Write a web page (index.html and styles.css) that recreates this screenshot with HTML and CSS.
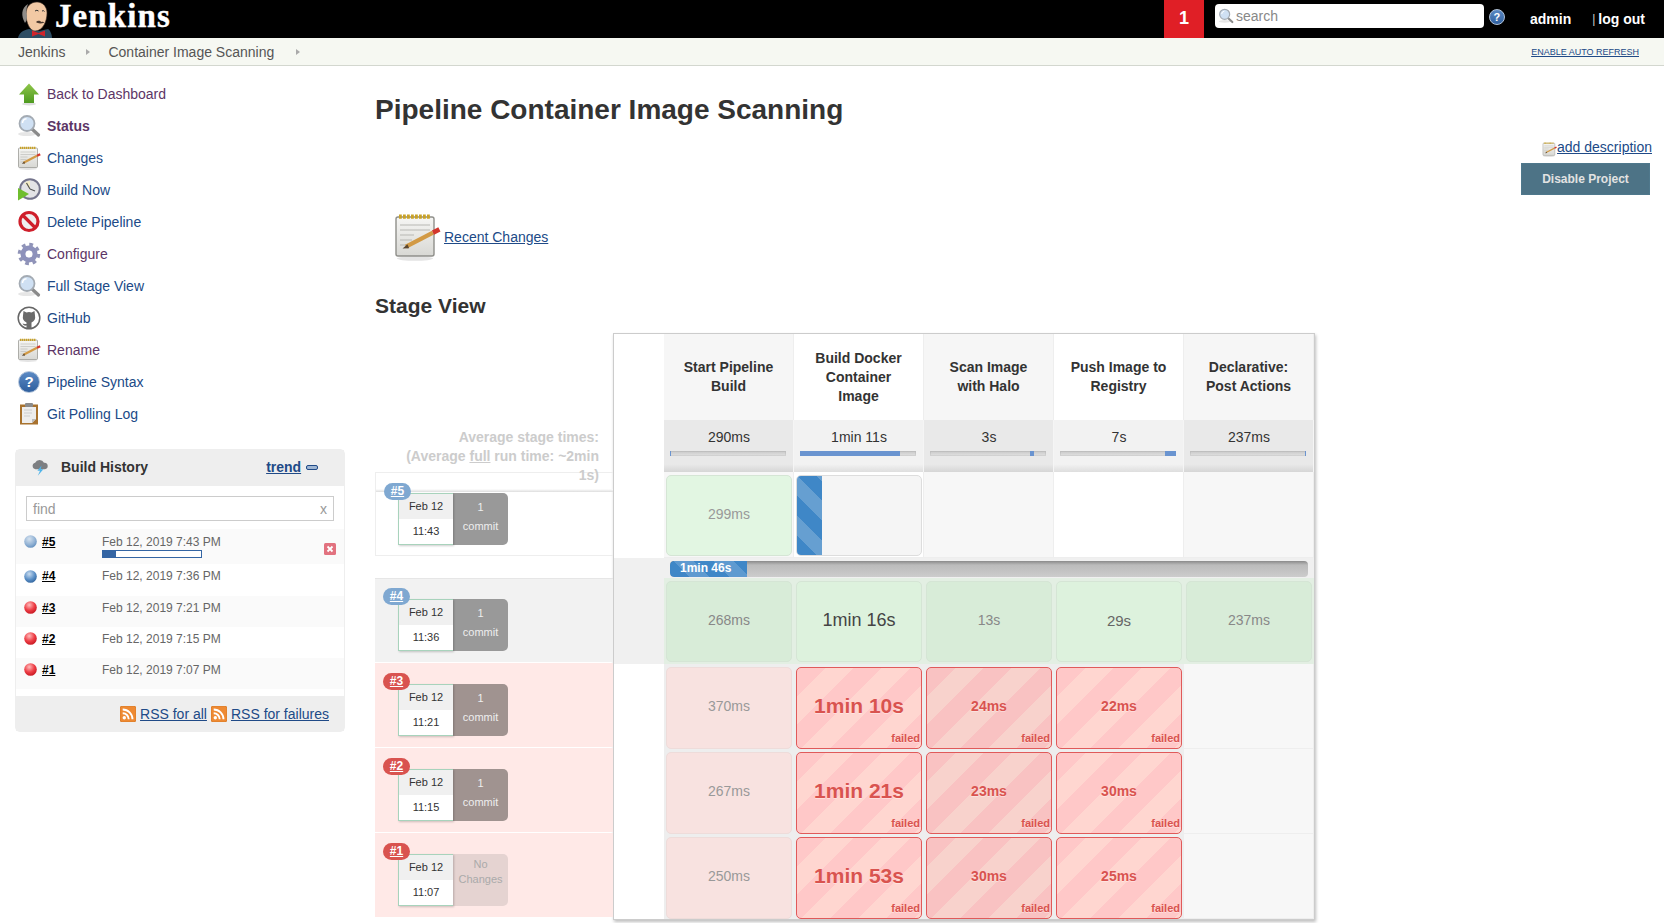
FILE: index.html
```html
<!DOCTYPE html>
<html lang="en">
	<head>
		<meta charset="UTF-8" />
		<title>Container Image Scanning [Jenkins]</title>
		<link rel="stylesheet" href="styles.css">
	</head>
	<body>
		<!-- shared icons -->
		<svg class="icon-defs" width="0" height="0">
			<defs>
				<radialGradient id="ball-blue" cx="40%" cy="30%" r="75%">
					<stop offset="0" stop-color="#c9dcef" />
					<stop offset="0.6" stop-color="#5b8fc6" />
					<stop offset="1" stop-color="#2f639c" />
				</radialGradient>
				<radialGradient id="ball-pale" cx="40%" cy="30%" r="75%">
					<stop offset="0" stop-color="#d5e2ef" />
					<stop offset="0.65" stop-color="#8fb0d3" />
					<stop offset="1" stop-color="#5f8dbd" />
				</radialGradient>
				<radialGradient id="ball-red" cx="40%" cy="30%" r="75%">
					<stop offset="0" stop-color="#fbb" />
					<stop offset="0.55" stop-color="#ee3f47" />
					<stop offset="1" stop-color="#c4141e" />
				</radialGradient>
				<linearGradient id="arrow-green" x1="0" y1="0" x2="0" y2="1">
					<stop offset="0" stop-color="#8fc64a" />
					<stop offset="1" stop-color="#4e9a20" />
				</linearGradient>
				<linearGradient id="paper" x1="0" y1="0" x2="0" y2="1">
					<stop offset="0" stop-color="#f6f6f4" />
					<stop offset="1" stop-color="#d8d8d4" />
				</linearGradient>
			</defs>
			<symbol id="i-up" viewBox="0 0 24 24">
				<ellipse cx="12" cy="22" rx="7" ry="1.5" fill="#ddd" />
				<path d="M12 1.5 22 12.5h-5V21H7v-8.500H2z" fill="url(#arrow-green)" />
			</symbol>
			<symbol id="i-search" viewBox="0 0 24 24">
				<ellipse cx="10" cy="20" rx="9" ry="2" fill="#e6e6e6" />
				<path d="M15 15l6.500 6" stroke="#8a8a8a" stroke-width="3.200" stroke-linecap="round" />
				<circle cx="10" cy="9.500" r="7.500" fill="#cfe0f3" stroke="#a4abb3" stroke-width="1.800" />
				<path d="M5.500 9a4.500 4.500 0 0 1 4-4.200" fill="none" stroke="#fff" stroke-width="1.500" />
			</symbol>
			<symbol id="i-notepad" viewBox="0 0 24 24">
				<ellipse cx="11" cy="22.800" rx="9" ry="1.100" fill="#e4e4e4" />
				<rect x="1.500" y="2" width="19" height="19.500" rx="1" fill="url(#paper)" stroke="#8f8f8a" stroke-width=".7" />
				<path d="M3 1.800h16" stroke="#c9a227" stroke-width="2.200" stroke-dasharray="1.400 .6" />
				<path d="M3.500 6h15M3.500 8.500h15M3.500 11h7M3.500 13.500h6M3.500 16h5" stroke="#b8b8b4" stroke-width=".6" />
				<path d="M6.500 16.800 20 9.800" stroke="#d29a45" stroke-width="2.200" />
				<path d="M20 9.800 23.200 8.200" stroke="#d3362c" stroke-width="2.400" />
				<path d="M4.800 17.800 7.200 15.600l.9 2z" fill="#5a4630" />
			</symbol>
			<symbol id="i-clock" viewBox="0 0 24 24">
				<circle cx="13" cy="11" r="9.800" fill="#e3e3e6" stroke="#74748c" stroke-width="2" />
				<path d="M13 11V3a8 8 0 0 0-5.500 2.200z" fill="#f3ecc4" />
				<path d="M13 11 9.500 5M13 11l5 2" stroke="#555" stroke-width="1.200" />
				<path d="M1 10 12 16 1 22.500z" fill="#6fbe2e" />
			</symbol>
			<symbol id="i-no" viewBox="0 0 24 24">
				<circle cx="12" cy="11.500" r="9" fill="#efefef" stroke="#cf1f2b" stroke-width="3.200" />
				<path d="M5.500 5 18.500 18" stroke="#cf1f2b" stroke-width="3.200" />
			</symbol>
			<symbol id="i-gear" viewBox="0 0 24 24">
				<circle cx="12" cy="12" r="6" fill="none" stroke="#8d91bb" stroke-width="5" />
				<circle cx="12" cy="12" r="9.500" fill="none" stroke="#9094b8" stroke-width="3.500" stroke-dasharray="3.700 3.760" />
				<circle cx="12" cy="12" r="3.200" fill="#fff" />
			</symbol>
			<symbol id="i-github" viewBox="0 0 24 24">
				<circle cx="12" cy="12" r="10.800" fill="#fff" stroke="#666" stroke-width="1.500" />
				<path d="M6 9.500 6.500 5l3 1.500a8 8 0 0 1 5 0L17.500 5l.5 4.500a6.300 6.300 0 0 1-3.500 7V22h-5v-2.500c-2 .5-3.200-.3-4-2 1 .3 2 .7 4 .5v-1.500A6.300 6.300 0 0 1 6 9.500z" fill="#6a6a6a" />
			</symbol>
			<symbol id="i-clip" viewBox="0 0 24 24">
				<rect x="3" y="2.500" width="18" height="20" fill="#a8722e" />
				<path d="M5 5h14v12l-4 4H5z" fill="#ededed" />
				<path d="M15 21v-4h4z" fill="#bbb" />
				<path d="M7 8h8M7 11h8M7 14h6" stroke="#ddd" stroke-width="2" />
				<rect x="8" y="1" width="8" height="4" rx="1" fill="#8b8b8b" />
			</symbol>
			<symbol id="i-weather" viewBox="0 0 24 24">
				<path d="M6 15a4.500 4.500 0 0 1-.5-8.800 6.500 6.500 0 0 1 11.800.2A4.300 4.300 0 0 1 18.500 15z" fill="#7d7f82" />
				<path d="M14 10 8.500 17H12l-3 6.500L16.500 15H13z" fill="#4fb3e8" />
			</symbol>
			<symbol id="i-rss" viewBox="0 0 16 16">
				<rect width="16" height="16" rx="2.500" fill="#ee8a33" stroke="#d97a26" />
				<circle cx="4.300" cy="11.700" r="1.700" fill="#fff" />
				<path d="M2.700 7.200a6 6 0 0 1 6 6M2.700 3.500a9.800 9.800 0 0 1 9.800 9.800" fill="none" stroke="#fff" stroke-width="1.900" />
			</symbol>
			<symbol id="i-stop" viewBox="0 0 12 12">
				<rect width="12" height="12" rx="1.500" fill="#e2727f" />
				<path d="M3.500 3.500l5 5M8.500 3.500l-5 5" stroke="#fff" stroke-width="1.800" />
			</symbol>
			<symbol id="i-ball-pale" viewBox="0 0 12 12"><circle cx="6" cy="6" r="5.800" fill="url(#ball-pale)" /></symbol>
			<symbol id="i-ball-blue" viewBox="0 0 12 12"><circle cx="6" cy="6" r="5.800" fill="url(#ball-blue)" /></symbol>
			<symbol id="i-ball-red" viewBox="0 0 12 12"><circle cx="6" cy="6" r="5.800" fill="url(#ball-red)" /></symbol>
		</svg>

		<header class="top-bar">
			<a class="logo" href="#">
				<svg class="butler" viewBox="0 0 34 38" width="34" height="38">
					<path d="M0 38c1-5 5-8 11-9l10 2 9-2c2 1 4 5 4 9z" fill="#2d4d63" />
					<path d="M8 14C8 6 13 2 19 2c6 0 10 5 10 11 0 8-4 18-12 18-5 0-9-8-9-17z" fill="#f2c9a4" stroke="#3a2a22" stroke-width=".6" />
					<path d="M7 23C3 16 3 8 10 4c-2 4-2 9-1 12 0 3-.5 5-2 7z" fill="#8f8c88" />
					<path d="M17 11q2-1.500 3.500 0M24 11q1.500-1 2.500.5" fill="none" stroke="#333" stroke-width="1" />
					<path d="M18 22c2-2 4-1 5.500 0 1-.5 2-.5 3 .5-3 1-6 1.500-8.500-.5z" fill="#4b3a30" />
					<path d="M14 30.500l6.500 2.500 6.500-2.500v6l-6.500-2.500-6.500 2.500z" fill="#d0242b" />
				</svg>
				<span class="logo-text">Jenkins</span>
			</a>
			<div class="alert-count">1</div>
			<div class="search-box">
				<svg class="search-icon"><use href="#i-search" /></svg>
				<span>search</span>
			</div>
			<span class="help-dot top-help">?</span>
			<a class="top-link user-link" href="#">admin</a>
			<span class="top-sep">|</span>
			<a class="top-link" href="#">log out</a>
		</header>

		<nav class="breadcrumbs">
			<a href="#">Jenkins</a>
			<span class="crumb-arrow"></span>
			<a href="#">Container Image Scanning</a>
			<span class="crumb-arrow crumb-last"></span>
			<a class="auto-refresh" href="#">ENABLE AUTO REFRESH</a>
		</nav>

		<div class="page">
			<aside class="sidebar">
				<ul class="side-tasks">
					<li><svg><use href="#i-up" /></svg><a class="visited" href="#">Back to Dashboard</a></li>
					<li><svg><use href="#i-search" /></svg><a class="visited current" href="#">Status</a></li>
					<li><svg><use href="#i-notepad" /></svg><a href="#">Changes</a></li>
					<li><svg><use href="#i-clock" /></svg><a href="#">Build Now</a></li>
					<li><svg><use href="#i-no" /></svg><a href="#">Delete Pipeline</a></li>
					<li><svg><use href="#i-gear" /></svg><a class="visited" href="#">Configure</a></li>
					<li><svg><use href="#i-search" /></svg><a href="#">Full Stage View</a></li>
					<li><svg><use href="#i-github" /></svg><a href="#">GitHub</a></li>
					<li><svg><use href="#i-notepad" /></svg><a class="visited" href="#">Rename</a></li>
					<li><span class="help-dot side-help">?</span><a href="#">Pipeline Syntax</a></li>
					<li><svg><use href="#i-clip" /></svg><a href="#">Git Polling Log</a></li>
				</ul>

				<section class="history">
					<div class="history-head">
						<svg class="weather-icon"><use href="#i-weather" /></svg>
						<b class="history-title">Build History</b>
						<a class="trend" href="#">trend</a>
						<span class="collapse"></span>
					</div>
					<div class="history-find"><span>find</span><span>x</span></div>
					<div class="history-row alt running">
						<svg class="ball"><use href="#i-ball-pale" /></svg>
						<a class="build-no" href="#">#5</a>
						<span class="build-date">Feb 12, 2019 7:43 PM</span>
						<svg class="stop"><use href="#i-stop" /></svg>
						<div class="mini-progress"><div class="mini-fill" style="width: 13%"></div></div>
					</div>
					<div class="history-row">
						<svg class="ball"><use href="#i-ball-blue" /></svg>
						<a class="build-no" href="#">#4</a>
						<span class="build-date">Feb 12, 2019 7:36 PM</span>
					</div>
					<div class="history-row alt">
						<svg class="ball"><use href="#i-ball-red" /></svg>
						<a class="build-no" href="#">#3</a>
						<span class="build-date">Feb 12, 2019 7:21 PM</span>
					</div>
					<div class="history-row">
						<svg class="ball"><use href="#i-ball-red" /></svg>
						<a class="build-no" href="#">#2</a>
						<span class="build-date">Feb 12, 2019 7:15 PM</span>
					</div>
					<div class="history-row alt">
						<svg class="ball"><use href="#i-ball-red" /></svg>
						<a class="build-no" href="#">#1</a>
						<span class="build-date">Feb 12, 2019 7:07 PM</span>
					</div>
					<div class="history-foot">
						<svg><use href="#i-rss" /></svg><a href="#">RSS for all</a>
						<svg><use href="#i-rss" /></svg><a href="#">RSS for failures</a>
					</div>
				</section>
			</aside>

			<main class="main">
				<div class="project-head">
					<h1>Pipeline Container Image Scanning</h1>
					<div class="project-actions">
						<div class="add-desc"><svg><use href="#i-notepad" /></svg><a href="#">add description</a></div>
						<button class="disable-btn">Disable Project</button>
					</div>
				</div>

				<div class="recent">
					<svg><use href="#i-notepad" /></svg>
					<a href="#">Recent Changes</a>
				</div>

				<h2>Stage View</h2>

				<div class="stage">
					<div class="builds">
						<div class="avg-label">Average stage times:<br>(Average <u>full</u> run time: ~2min 1s)</div>

						<div class="build first">
							<a class="badge" href="#">#5</a>
							<div class="build-date-card"><span>Feb 12</span><span>11:43</span></div>
							<div class="commits"><span>1</span><span>commit</span></div>
						</div>
						<div class="build second">
							<a class="badge" href="#">#4</a>
							<div class="build-date-card"><span>Feb 12</span><span>11:36</span></div>
							<div class="commits"><span>1</span><span>commit</span></div>
						</div>
						<div class="build failed">
							<a class="badge" href="#">#3</a>
							<div class="build-date-card"><span>Feb 12</span><span>11:21</span></div>
							<div class="commits"><span>1</span><span>commit</span></div>
						</div>
						<div class="build failed">
							<a class="badge" href="#">#2</a>
							<div class="build-date-card"><span>Feb 12</span><span>11:15</span></div>
							<div class="commits"><span>1</span><span>commit</span></div>
						</div>
						<div class="build failed">
							<a class="badge" href="#">#1</a>
							<div class="build-date-card"><span>Feb 12</span><span>11:07</span></div>
							<div class="commits no-changes"><span>No Changes</span></div>
						</div>
					</div>

					<div class="stage-table">
						<div class="label"></div>
						<div class="head">Start Pipeline Build</div>
						<div class="head even">Build Docker Container Image</div>
						<div class="head">Scan Image with Halo</div>
						<div class="head even">Push Image to Registry</div>
						<div class="head">Declarative: Post Actions</div>

						<div class="label"></div>
						<div class="avg">290ms<div class="avg-bar"><div class="avg-fill" style="left: 0; width: 1px"></div></div></div>
						<div class="avg even">1min 11s<div class="avg-bar"><div class="avg-fill" style="left: 0; width: 86%"></div></div></div>
						<div class="avg">3s<div class="avg-bar"><div class="avg-fill" style="left: 86%; width: 4px"></div></div></div>
						<div class="avg even">7s<div class="avg-bar"><div class="avg-fill" style="right: 0; width: 11px"></div></div></div>
						<div class="avg">237ms<div class="avg-bar"><div class="avg-fill" style="right: 0; width: 1px"></div></div></div>

						<div class="label"></div>
						<div class="slot"><div class="cell ok light">299ms</div></div>
						<div class="slot even"><div class="cell running-cell"><div class="running-fill"></div></div></div>
						<div class="slot"></div>
						<div class="slot even"></div>
						<div class="slot"></div>

						<div class="run-strip">
							<div class="run-bar"><div class="run-fill">1min 46s</div></div>
						</div>

						<div class="label grey"></div>
						<div class="slot ok-row"><div class="cell ok dim">268ms</div></div>
						<div class="slot ok-row"><div class="cell ok big">1min 16s</div></div>
						<div class="slot ok-row"><div class="cell ok dim">13s</div></div>
						<div class="slot ok-row"><div class="cell ok mid">29s</div></div>
						<div class="slot ok-row"><div class="cell ok dim">237ms</div></div>

						<div class="label"></div>
						<div class="slot fail-row"><div class="cell pale">370ms</div></div>
						<div class="slot fail-row"><div class="cell fail huge">1min 10s<em>failed</em></div></div>
						<div class="slot fail-row"><div class="cell fail muted">24ms<em>failed</em></div></div>
						<div class="slot fail-row"><div class="cell fail">22ms<em>failed</em></div></div>
						<div class="slot"></div>

						<div class="label"></div>
						<div class="slot fail-row"><div class="cell pale">267ms</div></div>
						<div class="slot fail-row"><div class="cell fail huge">1min 21s<em>failed</em></div></div>
						<div class="slot fail-row"><div class="cell fail muted">23ms<em>failed</em></div></div>
						<div class="slot fail-row"><div class="cell fail">30ms<em>failed</em></div></div>
						<div class="slot"></div>

						<div class="label"></div>
						<div class="slot fail-row"><div class="cell pale">250ms</div></div>
						<div class="slot fail-row"><div class="cell fail huge">1min 53s<em>failed</em></div></div>
						<div class="slot fail-row"><div class="cell fail muted">30ms<em>failed</em></div></div>
						<div class="slot fail-row"><div class="cell fail">25ms<em>failed</em></div></div>
						<div class="slot"></div>
					</div>
				</div>
			</main>
		</div>
	</body>
</html>
```

FILE: styles.css
```css
html,
body {
	height: 100%;
	overflow: hidden;
}
body {
	margin: 0;
	font-family: "Liberation Sans", Arial, sans-serif;
	font-size: 14px;
	color: #333;
	background: #fff;
}
a {
	color: #204a87;
	text-decoration: none;
}
svg {
	display: block;
	flex: none;
}
.icon-defs {
	position: absolute;
}
.help-dot {
	display: block;
	flex: none;
	box-sizing: border-box;
	border-radius: 50%;
	border: 1px solid #b3c4da;
	background: linear-gradient(#5b8ac4, #2f5f9e);
	color: #fff;
	font-weight: bold;
	text-align: center;
}

/* top bar */
.top-bar {
	display: flex;
	align-items: center;
	height: 38px;
	padding-right: 19px;
	background: #000;
}
.logo {
	display: flex;
	align-items: flex-start;
	margin-left: 18px;
	margin-right: auto;
}
.logo-text {
	margin-left: 3px;
	font-family: "Liberation Serif", serif;
	font-size: 33px;
	font-weight: bold;
	line-height: 33px;
	letter-spacing: 1.1px;
	color: #fff;
	-webkit-text-stroke: 0.4px #fff;
}
.alert-count {
	width: 40px;
	height: 38px;
	font-size: 18px;
	font-weight: bold;
	line-height: 36px;
	text-align: center;
	color: #fff;
	background: #e01f26;
}
.search-box {
	display: flex;
	align-items: center;
	gap: 2px;
	width: 269px;
	height: 24px;
	margin-left: 11px;
	margin-bottom: 6px;
	padding-left: 3px;
	box-sizing: border-box;
	border-radius: 4px;
	background: #fff;
	color: #888;
	font-size: 14px;
}
.search-icon {
	width: 16px;
	height: 16px;
}
.top-help {
	width: 16px;
	height: 16px;
	margin-left: 5px;
	margin-bottom: 4px;
	font-size: 11px;
	line-height: 14px;
}
.top-link {
	font-weight: bold;
	color: #fff;
}
.user-link {
	margin-left: 25px;
}
.top-sep {
	margin-left: 21px;
	margin-right: 3px;
	font-size: 12px;
	color: #ccc;
}

/* breadcrumbs */
.breadcrumbs {
	display: flex;
	align-items: center;
	height: 27px;
	padding-left: 18px;
	background: #f6f8f2;
	border-bottom: 1px solid #d3d7cf;
}
.breadcrumbs a {
	color: #555;
}
.crumb-arrow {
	width: 0;
	height: 0;
	margin: 0 18px 0 21px;
	border-left: 4px solid #aaa;
	border-top: 3.5px solid transparent;
	border-bottom: 3.500px solid transparent;
}
.crumb-last {
	margin-left: 22px;
	margin-right: auto;
}
.breadcrumbs .auto-refresh {
	margin-right: 25px;
	font-size: 9px;
	color: #204a87;
	text-decoration: underline;
}

/* layout */
.page {
	display: flex;
}
.sidebar {
	width: 375px;
	flex: none;
	padding-top: 12px;
	box-sizing: border-box;
}
.side-tasks {
	margin: 0;
	padding: 0 0 0 17px;
	list-style: none;
}
.side-tasks li {
	display: flex;
	align-items: center;
	gap: 6px;
	height: 32px;
}
.side-tasks svg {
	width: 24px;
	height: 24px;
}
.side-help {
	width: 22px;
	height: 22px;
	margin: 0 1px;
	font-size: 15px;
	line-height: 20px;
}
.visited {
	color: #5c3566;
}
.current {
	font-weight: bold;
}

/* build history */
.history {
	width: 330px;
	margin: 19px 0 0 15px;
	box-sizing: border-box;
	border: 1px solid #eee;
	border-radius: 5px;
}
.history-head {
	display: flex;
	align-items: center;
	height: 36px;
	padding: 0 0 2px 15px;
	box-sizing: border-box;
	background: #eee;
}
.weather-icon {
	width: 18px;
	height: 18px;
}
.history-title {
	margin-left: 12px;
}
.trend {
	margin-left: 118px;
	font-weight: bold;
	text-decoration: underline;
}
.collapse {
	width: 10px;
	height: 3px;
	margin-left: 5px;
	border: 1px solid #204a87;
	border-radius: 2px;
	background: #9fb6d3;
}
.history-find {
	display: flex;
	justify-content: space-between;
	align-items: center;
	height: 25px;
	margin: 10px 10px 8px;
	padding: 0 6px;
	box-sizing: border-box;
	border: 1px solid #ccc;
	color: #999;
}
.history-row {
	display: flex;
	flex-wrap: wrap;
	align-items: center;
	height: 31px;
	padding: 0 0 8px 8px;
	box-sizing: border-box;
	font-size: 12px;
}
.history-row.alt {
	background: #fafafa;
}
.history-row.running {
	position: relative;
	height: 35px;
	align-items: flex-start;
	padding: 6px 0 0 8px;
}
.history-row:nth-child(4) {
	height: 32px;
}
.ball {
	width: 13px;
	height: 13px;
	margin-right: 5px;
}
.build-no {
	width: 60px;
	font-weight: bold;
	color: #000;
	text-decoration: underline;
}
.build-date {
	color: #666;
}
.stop {
	position: absolute;
	top: 14px;
	right: 8px;
	width: 12px;
	height: 12px;
}
.mini-progress {
	position: absolute;
	left: 86px;
	top: 21px;
	width: 100px;
	height: 8px;
	box-sizing: border-box;
	border: 1px solid #3465a4;
	background: #fff;
}
.mini-fill {
	height: 100%;
	background: #3465a4;
}
.history-foot {
	display: flex;
	justify-content: flex-end;
	align-items: center;
	height: 35px;
	margin-top: 7px;
	padding-right: 15px;
	background: #eee;
}
.history-foot svg {
	width: 16px;
	height: 16px;
	margin: 0 4px;
}
.history-foot a {
	text-decoration: underline;
}

/* main */
.main {
	flex: 1;
	min-width: 0;
	padding: 27px 13px 0 0;
}
.project-head {
	display: flex;
	justify-content: space-between;
	min-height: 120px;
}
h1 {
	margin: 0;
	font-size: 28px;
	line-height: 34px;
	color: #333;
}
.project-actions {
	display: flex;
	flex-direction: column;
	align-items: flex-end;
	padding-top: 46px;
}
.add-desc {
	display: flex;
	align-items: flex-end;
	height: 16px;
	margin-right: -1px;
}
.add-desc svg {
	width: 15px;
	height: 15px;
	margin-bottom: -2px;
}
.add-desc a {
	text-decoration: underline;
	line-height: 16px;
}
.disable-btn {
	width: 129px;
	height: 32px;
	margin: 8px 1px 0 0;
	border: 1px solid #4f788c;
	background: #4d7386;
	color: #e2e2e2;
	font-family: inherit;
	font-size: 12px;
	font-weight: bold;
}
.recent {
	display: flex;
	align-items: center;
	gap: 3px;
	height: 48px;
	padding-left: 18px;
}
.recent svg {
	width: 48px;
	height: 48px;
}
.recent a {
	font-size: 14px;
	text-decoration: underline;
}
h2 {
	margin: 32px 0 14px;
	font-size: 21px;
	line-height: 26px;
	color: #333;
}

/* stage view */
.stage {
	display: flex;
	align-items: flex-start;
}
.builds {
	position: relative;
	width: 238px;
	flex: none;
	padding-top: 139px;
}
.avg-label {
	position: absolute;
	z-index: 2;
	top: 95px;
	right: 14px;
	width: 200px;
	font-weight: bold;
	line-height: 19px;
	text-align: right;
	color: #ccc;
}
.build {
	position: relative;
	display: flex;
	height: 84px;
	margin-top: 1px;
	padding: 21px 0 0 23px;
	box-sizing: border-box;
}
.build.first {
	margin-top: 0;
	border: 1px solid #eee;
	border-right: 0;
	padding: 20px 0 0 22px;
}
.build.first::before {
	content: "";
	position: absolute;
	left: 0;
	right: 0;
	top: 16px;
	height: 3px;
	background: linear-gradient(#fff, #ddd);
}
.build.second {
	margin-top: 22px;
	padding-top: 20px;
	border-top: 1px solid #e6e6e6;
	background: #f2f2f2;
}
.build.failed {
	background: #ffe9e7;
}
.badge {
	position: absolute;
	z-index: 1;
	left: 8px;
	top: 10px;
	width: 27px;
	height: 17px;
	border-radius: 9px;
	background: #7fa8d1;
	color: #fff;
	font-size: 12px;
	font-weight: bold;
	line-height: 17px;
	text-align: center;
	text-decoration: underline;
}
.second .badge {
	top: 9px;
}
.failed .badge {
	background: #d9534f;
}
.build-date-card {
	position: relative;
	display: flex;
	flex-direction: column;
	width: 55px;
	height: 52px;
	box-sizing: border-box;
	border: 1px solid #a8d3bc;
	border-right: 0;
	box-shadow: 1px 1px 2px rgba(0, 0, 0, 0.2);
	font-size: 11px;
	text-align: center;
	color: #333;
}
.build-date-card span {
	flex: 1;
	line-height: 25px;
	background: #fff;
}
.build-date-card span:first-child {
	background: #f0f0f0;
}
.commits {
	display: flex;
	flex-direction: column;
	justify-content: center;
	width: 55px;
	height: 52px;
	padding-bottom: 5px;
	box-sizing: border-box;
	border-radius: 0 5px 5px 0;
	background: #999;
	color: #eee;
	font-size: 11px;
	line-height: 19px;
	text-align: center;
}
.failed .commits {
	background: #a09390;
}
.failed .commits.no-changes {
	padding-bottom: 16px;
	background: #e5d3d1;
	color: #aaa;
	line-height: 15px;
}
.stage-table {
	display: grid;
	grid-template-columns: 50px repeat(5, 130px);
	grid-template-rows: 86px 52px 86px 20px 86px 85px 85px 85px;
	border: 1px solid #ccc;
	box-shadow: 1px 2px 3px rgba(0, 0, 0, 0.25);
	background: #fff;
}
.label.grey {
	background: #f0f0f0;
}
.head {
	display: flex;
	align-items: center;
	justify-content: center;
	padding: 0 15px;
	border-right: 1px solid #eee;
	background: #f6f6f6;
	font-weight: bold;
	line-height: 19px;
	text-align: center;
	color: #333;
}
.head.even {
	background: #fff;
}
.avg {
	padding: 9px 4px 0 5px;
	border-right: 1px solid #f5f5f5;
	box-sizing: border-box;
	background: linear-gradient(#e9e9e9 85%, #d6d6d6);
	line-height: 17px;
	text-align: center;
	color: #333;
}
.avg.even {
	background: linear-gradient(#f2f2f2 85%, #dedede);
}
.avg-bar {
	position: relative;
	height: 5px;
	margin: 5px 3px 0 1px;
	background: linear-gradient(#c8c8c8, #e2e2e2);
	box-shadow: inset 0 0 0 1px rgba(0, 0, 0, 0.06);
}
.avg-fill {
	position: absolute;
	top: 0;
	bottom: 0;
	background: #6a94d0;
}
.slot {
	padding: 3px 1px 1px 2px;
	box-sizing: border-box;
	border-right: 1px solid #eee;
	border-bottom: 1px solid #eee;
	background: #f7f7f7;
}
.slot.even {
	background: #fff;
}
.slot.ok-row {
	background: #e3efe3;
	border-color: #e3efe3;
}
.slot.fail-row {
	padding-bottom: 0;
	border-bottom: 0;
	background: #eee;
}
.cell {
	position: relative;
	display: flex;
	align-items: center;
	justify-content: center;
	height: 100%;
	padding-bottom: 3px;
	box-sizing: border-box;
	border: 1px solid #d5e5d5;
	border-radius: 5px;
	color: #999;
}
.cell.ok {
	background: #ddf2dd;
}
.cell.ok.light {
	background: #e2f6e2;
}
.cell.ok.dim {
	background: #d8ecd8;
	color: #888;
}
.cell.big {
	font-size: 18px;
	color: #444;
}
.cell.mid {
	font-size: 15px;
	color: #666;
}
.running-cell {
	justify-content: flex-start;
	padding-bottom: 0;
	border-color: #ddd;
	background: #f5f5f5;
	overflow: hidden;
}
.running-fill {
	width: 25px;
	height: 100%;
	background: repeating-linear-gradient(45deg, #3f87c7 0 14px, #669fd1 14px 28px);
}
.run-strip {
	grid-column: 1 / -1;
	padding: 3px 6px 1px 56px;
	background: #f0f0f0;
}
.run-bar {
	height: 16px;
	border-radius: 4px;
	background: linear-gradient(#8a8a8a, #bbb 25%, #ccc);
	overflow: hidden;
}
.run-fill {
	width: 67px;
	height: 100%;
	padding-left: 10px;
	border-radius: 4px 0 0 4px;
	background: repeating-linear-gradient(45deg, #3f87c7 0 14px, #5e9ad0 14px 28px);
	color: #fff;
	font-size: 12px;
	font-weight: bold;
	line-height: 14px;
}
.cell.pale {
	padding-bottom: 5px;
	border-color: #eedcda;
	background: #f8e2e0;
}
.cell.fail {
	padding-bottom: 5px;
	border: 1.5px solid #e05a5a;
	background: repeating-linear-gradient(135deg, #ffc8c8 0 20px, #ffd6d0 20px 40px);
	color: #d9534f;
	font-weight: bold;
	text-shadow: 0 1px 0 rgba(255, 255, 255, 0.4);
}
.cell.fail.muted {
	background: repeating-linear-gradient(135deg, #f9c2c2 0 20px, #f8d2cc 20px 40px);
}
.cell.huge {
	font-size: 21px;
}
.cell.fail em {
	position: absolute;
	right: 1px;
	bottom: 4px;
	font-size: 11px;
	font-style: normal;
}
```
